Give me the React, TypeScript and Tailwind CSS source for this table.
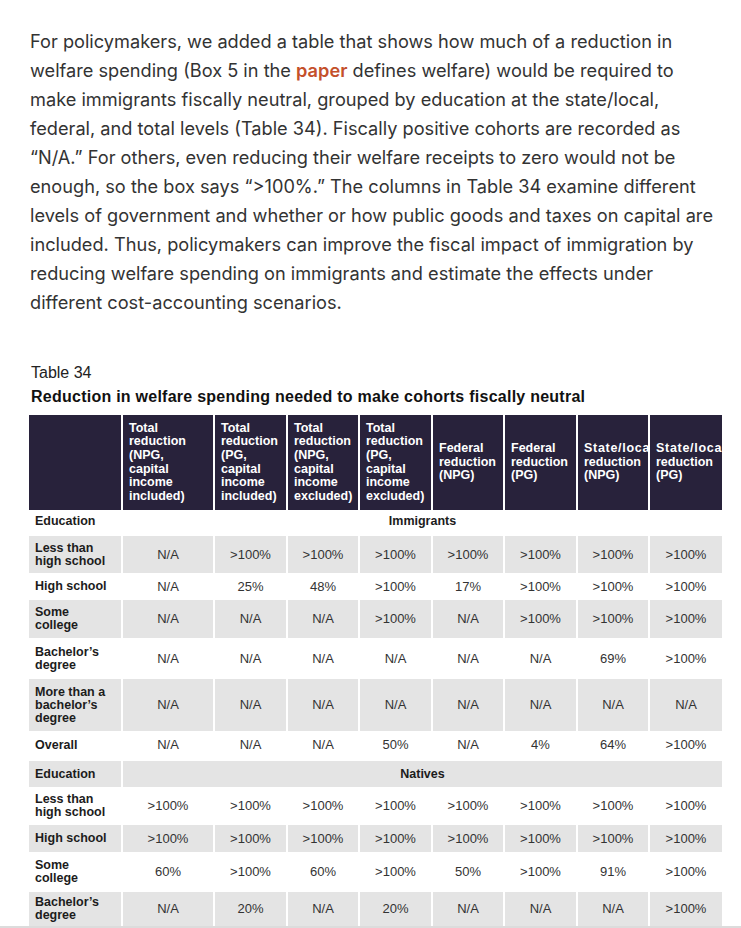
// Table 34 — reduction in welfare spending, with intro paragraph

const COLS: string[][] = [
  ["Total", "reduction", "(NPG,", "capital", "income", "included)"],
  ["Total", "reduction", "(PG,", "capital", "income", "included)"],
  ["Total", "reduction", "(NPG,", "capital", "income", "excluded)"],
  ["Total", "reduction", "(PG,", "capital", "income", "excluded)"],
  ["Federal", "reduction", "(NPG)"],
  ["Federal", "reduction", "(PG)"],
  ["State/local", "reduction", "(NPG)"],
  ["State/local", "reduction", "(PG)"],
];

const WIDTHS = [93, 92, 73, 72, 73, 72, 73, 72, 73];

type Row = { label: string[]; values: string[]; h: number; shade: boolean };

const IMMIGRANTS: Row[] = [
  { label: ["Less than", "high school"], values: ["N/A", ">100%", ">100%", ">100%", ">100%", ">100%", ">100%", ">100%"], h: 37, shade: true },
  { label: ["High school"], values: ["N/A", "25%", "48%", ">100%", "17%", ">100%", ">100%", ">100%"], h: 27, shade: false },
  { label: ["Some", "college"], values: ["N/A", "N/A", "N/A", ">100%", "N/A", ">100%", ">100%", ">100%"], h: 38, shade: true },
  { label: ["Bachelor’s", "degree"], values: ["N/A", "N/A", "N/A", "N/A", "N/A", "N/A", "69%", ">100%"], h: 41, shade: false },
  { label: ["More than a", "bachelor’s", "degree"], values: ["N/A", "N/A", "N/A", "N/A", "N/A", "N/A", "N/A", "N/A"], h: 52, shade: true },
  { label: ["Overall"], values: ["N/A", "N/A", "N/A", "50%", "N/A", "4%", "64%", ">100%"], h: 28, shade: false },
];

const NATIVES: Row[] = [
  { label: ["Less than", "high school"], values: [">100%", ">100%", ">100%", ">100%", ">100%", ">100%", ">100%", ">100%"], h: 38, shade: false },
  { label: ["High school"], values: [">100%", ">100%", ">100%", ">100%", ">100%", ">100%", ">100%", ">100%"], h: 27, shade: true },
  { label: ["Some", "college"], values: ["60%", ">100%", "60%", ">100%", "50%", ">100%", "91%", ">100%"], h: 40, shade: false },
  { label: ["Bachelor’s", "degree"], values: ["N/A", "20%", "N/A", "20%", "N/A", "N/A", "N/A", ">100%"], h: 34, shade: true },
];

const LINES = [
  "For policymakers, we added a table that shows how much of a reduction in",
  null, // line with the link
  "make immigrants fiscally neutral, grouped by education at the state/local,",
  "federal, and total levels (Table 34). Fiscally positive cohorts are recorded as",
  "“N/A.” For others, even reducing their welfare receipts to zero would not be",
  "enough, so the box says “>100%.” The columns in Table 34 examine different",
  "levels of government and whether or how public goods and taxes on capital are",
  "included. Thus, policymakers can improve the fiscal impact of immigration by",
  "reducing welfare spending on immigrants and estimate the effects under",
  "different cost-accounting scenarios.",
];

function DataRow({ row }: { row: Row }) {
  const bg = row.shade ? "bg-[#e4e4e4]" : "bg-white";
  return (
    <tr style={{ height: row.h }} className={bg}>
      <td className="pl-[6px] pr-1 align-middle text-[12.5px] font-bold leading-[13px] text-[#1c1c1c]">
        {row.label.map((l) => (
          <span key={l} className="block whitespace-nowrap">
            {l}
          </span>
        ))}
      </td>
      {row.values.map((v, i) => (
        <td key={i} className="border-l-2 border-white text-center align-middle text-[13px] text-[#333]">
          {v}
        </td>
      ))}
    </tr>
  );
}

function GroupRow({ name, shade }: { name: string; shade: boolean }) {
  const bg = shade ? "bg-[#e4e4e4]" : "bg-white";
  return (
    <tr className={bg} style={{ height: shade ? 26 : 22 }}>
      <td className="pl-[6px] align-middle text-[12.5px] font-bold text-[#1c1c1c]">Education</td>
      <td colSpan={8} className="border-l-2 border-white text-center align-middle text-[12.5px] font-bold text-[#1c1c1c]">
        {name}
      </td>
    </tr>
  );
}

export default function App() {
  return (
    <div className="min-h-[928px] bg-white font-['Inter',sans-serif]">
      <p className="px-[30px] pt-[27px] text-[18.2px] leading-[29px] text-[#333]">
        {LINES.map((l, i) =>
          l === null ? (
            <span key={i} className="block whitespace-nowrap">
              welfare spending (Box 5 in the{" "}
              <span className="font-semibold text-[#c4502b]">paper</span> defines welfare) would be required to
            </span>
          ) : (
            <span key={i} className="block whitespace-nowrap">
              {l}
            </span>
          )
        )}
      </p>

      <div className="mt-[46px] pl-[31px] font-['Liberation_Sans',Arial,sans-serif]">
        <div className="text-[16px] leading-[20px] text-[#222]">Table 34</div>
        <div className="mt-[4px] text-[16px] font-bold leading-[20px] tracking-[0.25px] text-[#111]">
          Reduction in welfare spending needed to make cohorts fiscally neutral
        </div>
      </div>

      <div className="mt-[8px] pl-[29px] font-['Liberation_Sans',Arial,sans-serif]">
        <table className="table-fixed border-collapse" style={{ width: 693 }}>
          <colgroup>
            {WIDTHS.map((w, i) => (
              <col key={i} style={{ width: w }} />
            ))}
          </colgroup>
          <thead>
            <tr className="h-[95px] bg-[#28223b]">
              <th />
              {COLS.map((c, i) => (
                <th
                  key={i}
                  className="overflow-hidden border-l-2 border-white pl-[6px] pr-0 text-left align-middle text-[12.5px] font-bold leading-[13.6px] text-white"
                >
                  {c.map((line) => (
                    <span
                      key={line}
                      className={`block whitespace-nowrap ${line === "State/local" ? "tracking-[0.7px]" : ""}`}
                    >
                      {line}
                    </span>
                  ))}
                </th>
              ))}
            </tr>
          </thead>
          <tbody>
            <GroupRow name="Immigrants" shade={false} />
            <tr className="h-[4px]" />
            {IMMIGRANTS.map((r) => (
              <DataRow key={r.label.join(" ")} row={r} />
            ))}
            <tr className="h-[2px]" />
            <GroupRow name="Natives" shade />
            {NATIVES.map((r) => (
              <DataRow key={r.label.join(" ") + "n"} row={r} />
            ))}
          </tbody>
        </table>
      </div>
      <div className="h-[6px] w-full bg-[#dcdcdc]" />
    </div>
  );
}
